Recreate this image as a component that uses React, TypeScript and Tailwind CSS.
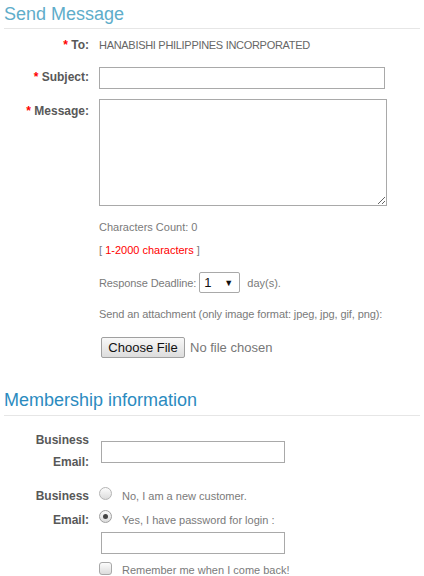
export default function App() {
  return (
    <div className="w-[424px] h-[576px] overflow-hidden bg-white font-['Liberation_Sans',Arial,sans-serif] text-[#555]">
      {/* Send Message */}
      <div className="mx-[4px] pt-[3px] pb-[3px] border-b border-[#e6e6e6]">
        <h2 className="text-[18px] leading-[22px] text-[#5fadca]">Send Message</h2>
      </div>

      <div className="mt-[8px] flex items-baseline">
        <label className="w-[89px] text-right text-[12px] leading-[16px] font-bold text-[#585858]">
          <span className="text-[#ff0000]">*</span> To:
        </label>
        <span className="ml-[10px] text-[11px] leading-[14px] text-[#666] tracking-[-0.3px]">
          HANABISHI PHILIPPINES INCORPORATED
        </span>
      </div>

      <div className="mt-[14px] flex items-start">
        <label className="w-[89px] pt-[2px] text-right text-[12px] leading-[16px] font-bold text-[#585858]">
          <span className="text-[#ff0000]">*</span> Subject:
        </label>
        <input
          type="text"
          className="ml-[10px] w-[286px] h-[22px] border border-[#a9a9a9] outline-none px-1 text-[13px]"
        />
      </div>

      <div className="mt-[10px] flex items-start">
        <label className="w-[89px] pt-[4px] text-right text-[12px] leading-[16px] font-bold text-[#585858]">
          <span className="text-[#ff0000]">*</span> Message:
        </label>
        <textarea className="ml-[10px] w-[288px] h-[107px] border border-[#a9a9a9] outline-none p-1 text-[13px] resize" />
      </div>

      <div className="ml-[99px] text-[11px] leading-[14px] text-[#7a7a7a]">
        <p className="mt-[14px]">Characters Count: 0</p>
        <p className="mt-[9px]">
          [ <span className="text-[#ff0000]">1-2000 characters</span> ]
        </p>
        <div className="mt-[15px] h-[21px] flex items-center">
          <span className="tracking-[-0.1px]">Response Deadline:</span>
          <div className="ml-[3px] w-[41px] h-[21px] border border-[#a9a9a9] rounded-[2px] flex items-center justify-between pl-[4px] pr-[6px] text-[13px] text-[#111]">
            <span>1</span>
            <span className="text-[9px]">▼</span>
          </div>
          <span className="ml-[7px]">day(s).</span>
        </div>
        <p className="mt-[14px] tracking-[-0.1px]">Send an attachment (only image format: jpeg, jpg, gif, png):</p>
        <div className="mt-[16px] flex items-center">
          <div className="ml-[2px] w-[84px] h-[21px] border border-[#a0a0a0] rounded-[2px] bg-gradient-to-b from-[#f8f8f8] to-[#dddddd] flex items-center justify-center text-[13px] text-[#111]">
            Choose File
          </div>
          <span className="ml-[5px] text-[13px] text-[#777]">No file chosen</span>
        </div>
      </div>

      {/* Membership information */}
      <div className="mt-[31px] mx-[4px] pb-[4px] border-b border-[#e6e6e6]">
        <h2 className="text-[18px] leading-[22px] text-[#2b8bbf]">Membership information</h2>
      </div>

      <div className="mt-[13px] flex items-start">
        <label className="w-[89px] text-right text-[12px] leading-[22px] font-bold text-[#585858]">
          Business
          <br />
          Email:
        </label>
        <input
          type="text"
          className="ml-[12px] mt-[12px] w-[184px] h-[22px] border border-[#a9a9a9] outline-none px-1 text-[13px]"
        />
      </div>

      <div className="mt-[11px] flex items-start">
        <label className="w-[89px] text-right text-[12px] leading-[24px] font-bold text-[#585858]">
          Business
          <br />
          Email:
        </label>
        <div className="ml-[10px] text-[11px] leading-[24px] text-[#7a7a7a]">
          <div className="flex items-start">
            <span className="mt-[3px] w-[13px] h-[13px] rounded-full border border-[#b4b4b4] bg-gradient-to-b from-[#fcfcfc] to-[#dcdcdc]" />
            <span className="ml-[10px]">No, I am a new customer.</span>
          </div>
          <div className="flex items-start">
            <span className="mt-[2px] w-[13px] h-[13px] rounded-full border border-[#a0a0a0] bg-gradient-to-b from-[#fcfcfc] to-[#dcdcdc] flex items-center justify-center">
              <span className="w-[5px] h-[5px] rounded-full bg-[#444]" />
            </span>
            <span className="ml-[10px]">Yes, I have password for login :</span>
          </div>
          <input
            type="password"
            className="ml-[2px] block w-[184px] h-[22px] border border-[#a9a9a9] outline-none px-1 text-[13px]"
          />
          <div className="mt-[4px] flex items-start">
            <span className="mt-[4px] w-[13px] h-[13px] rounded-[3px] border border-[#a8a8a8] bg-gradient-to-b from-[#fcfcfc] to-[#dcdcdc]" />
            <span className="ml-[10px]">Remember me when I come back!</span>
          </div>
        </div>
      </div>
    </div>
  );
}
